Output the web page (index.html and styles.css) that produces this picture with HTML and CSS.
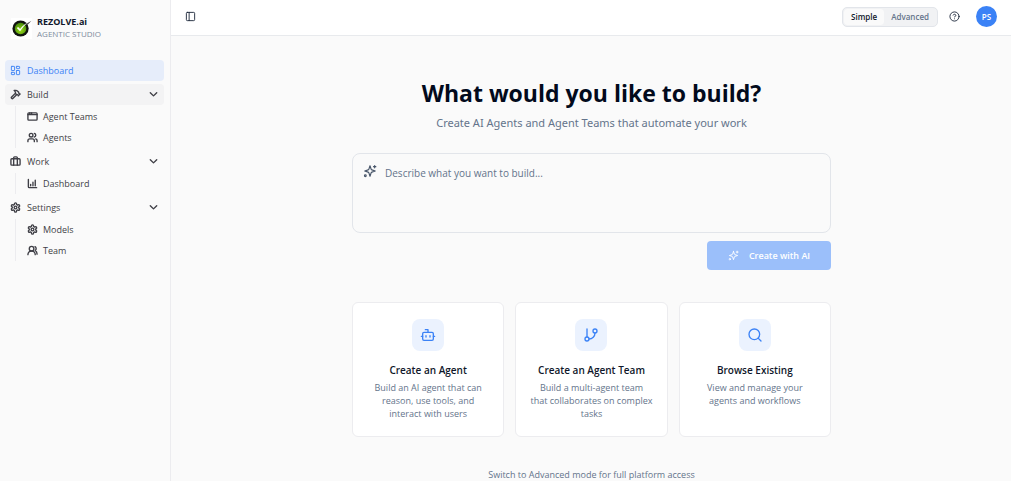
FILE: index.html
```html
<!DOCTYPE html>
<html lang="en">
<head>
<meta charset="utf-8">
<meta name="viewport" content="width=device-width, initial-scale=1">
<title>REZOLVE.ai Agentic Studio</title>
<link rel="stylesheet" href="styles.css">
</head>
<body>
<svg class="sprite" aria-hidden="true">
  <symbol id="sparkles" viewBox="0 0 24 24"><path d="M12 3l-1.900 5.800a2 2 0 0 1-1.300 1.300L3 12l5.800 1.900a2 2 0 0 1 1.300 1.300L12 21l1.900-5.800a2 2 0 0 1 1.300-1.300L21 12l-5.800-1.900a2 2 0 0 1-1.300-1.300L12 3ZM20 2.500v4M22 4.500h-4"/><circle cx="4" cy="20" r="1.500"/></symbol>
  <symbol id="chevron" viewBox="0 0 24 24"><path d="m5 8 7 7 7-7"/></symbol>
  <symbol id="gear" viewBox="0 0 24 24"><path d="M12.220 2h-.44a2 2 0 0 0-2 2v.18a2 2 0 0 1-1 1.730l-.43.25a2 2 0 0 1-2 0l-.15-.08a2 2 0 0 0-2.730.73l-.22.38a2 2 0 0 0 .73 2.730l.15.1a2 2 0 0 1 1 1.720v.51a2 2 0 0 1-1 1.740l-.15.09a2 2 0 0 0-.73 2.730l.22.38a2 2 0 0 0 2.730.73l.15-.08a2 2 0 0 1 2 0l.43.25a2 2 0 0 1 1 1.730V20a2 2 0 0 0 2 2h.44a2 2 0 0 0 2-2v-.18a2 2 0 0 1 1-1.730l.43-.25a2 2 0 0 1 2 0l.15.08a2 2 0 0 0 2.730-.73l.22-.39a2 2 0 0 0-.73-2.730l-.15-.08a2 2 0 0 1-1-1.740v-.5a2 2 0 0 1 1-1.740l.15-.09a2 2 0 0 0 .73-2.730l-.22-.38a2 2 0 0 0-2.730-.73l-.15.08a2 2 0 0 1-2 0l-.43-.25a2 2 0 0 1-1-1.730V4a2 2 0 0 0-2-2z"/><circle cx="12" cy="12" r="3"/></symbol>
</svg>
<div class="app">
  <aside class="sidebar">
    <div class="brand">
      <svg class="logo" viewBox="0 0 44 44" aria-hidden="true">
        <defs><radialGradient id="orb" cx="50%" cy="65%" r="60%"><stop offset="0" stop-color="#9bdc1c"/><stop offset="1" stop-color="#4a8f0a"/></radialGradient></defs>
        <rect width="44" height="44" fill="#fff"/>
        <circle cx="20" cy="22" r="17" fill="#11150f"/>
        <circle cx="20" cy="22" r="12" fill="url(#orb)"/>
        <path d="M12 21l3-2 4 4C25 16 31 11 36 9 30 14 24 20 19 28z" fill="#fff"/>
        <path d="M30 13 43 6 35 14z" fill="#555"/>
      </svg>
      <div class="brand-text">
        <span class="brand-name">REZOLVE.ai</span>
        <span class="brand-sub">AGENTIC STUDIO</span>
      </div>
    </div>
    <nav class="nav" aria-label="Main">
      <a class="nav-row active" href="#dashboard"><svg class="icon" viewBox="0 0 24 24"><rect x="3" y="3" width="7" height="9" rx="1"/><rect x="14" y="3" width="7" height="5" rx="1"/><rect x="14" y="12" width="7" height="9" rx="1"/><rect x="3" y="16" width="7" height="5" rx="1"/></svg>Dashboard</a>
      <div class="group">
        <button class="nav-row hovered" type="button" aria-expanded="true"><svg class="icon" viewBox="0 0 24 24"><path d="m15 12-8.400 8.400a2.100 2.100 0 0 1-3-3L12 9M18 15l4-4M21.500 11.500l-1.900-1.900A2 2 0 0 1 19 8.200V7l-2.300-2.300a6 6 0 0 0-4.200-1.700H9l.9.8A6.200 6.200 0 0 1 12 8.400V10l2 2h1.200a2 2 0 0 1 1.400.6l1.900 1.900"/></svg>Build<svg class="icon chev"><use href="#chevron"/></svg></button>
        <div class="sub">
          <a class="nav-row" href="#teams"><svg class="icon" viewBox="0 0 24 24"><rect x="2" y="4" width="20" height="16" rx="2"/><path d="M10 4v4M2 8h20M6 4v4"/></svg>Agent Teams</a>
          <a class="nav-row" href="#agents"><svg class="icon" viewBox="0 0 24 24"><path d="M16 21v-2a4 4 0 0 0-4-4H6a4 4 0 0 0-4 4v2M22 21v-2a4 4 0 0 0-3-3.900M16 3.100a4 4 0 0 1 0 7.800"/><circle cx="9" cy="7" r="4"/></svg>Agents</a>
        </div>
      </div>
      <div class="group">
        <button class="nav-row" type="button" aria-expanded="true"><svg class="icon" viewBox="0 0 24 24"><rect x="2" y="6" width="20" height="14" rx="2"/><path d="M16 20V4a2 2 0 0 0-2-2h-4a2 2 0 0 0-2 2v16"/></svg>Work<svg class="icon chev"><use href="#chevron"/></svg></button>
        <div class="sub">
          <a class="nav-row" href="#work"><svg class="icon" viewBox="0 0 24 24"><path d="M3 3v16a2 2 0 0 0 2 2h16M8 17v-3M13 17V9M18 17V5"/></svg>Dashboard</a>
        </div>
      </div>
      <div class="group">
        <button class="nav-row" type="button" aria-expanded="true"><svg class="icon"><use href="#gear"/></svg>Settings<svg class="icon chev"><use href="#chevron"/></svg></button>
        <div class="sub">
          <a class="nav-row" href="#models"><svg class="icon"><use href="#gear"/></svg>Models</a>
          <a class="nav-row" href="#team"><svg class="icon" viewBox="0 0 24 24"><path d="M18 21a8 8 0 0 0-16 0"/><circle cx="10" cy="8" r="5"/><path d="M22 20c0-3.400-2-6.500-4-8a5 5 0 0 0-.5-8.300"/></svg>Team</a>
        </div>
      </div>
    </nav>
  </aside>
  <div class="content">
    <header class="topbar">
      <button class="icon-button" type="button" aria-label="Toggle sidebar"><svg class="icon" viewBox="0 0 24 24"><rect x="3" y="3" width="18" height="18" rx="2"/><path d="M9 3v18"/></svg></button>
      <div class="tools">
        <div class="modes">
          <button class="mode selected" type="button" aria-pressed="true">Simple</button>
          <button class="mode" type="button" aria-pressed="false">Advanced</button>
        </div>
        <button class="icon-button" type="button" aria-label="Help"><svg class="icon" viewBox="0 0 24 24"><circle cx="12" cy="12" r="10"/><path d="M9.100 9a3 3 0 0 1 5.800 1c0 2-3 3-3 3M12 17h.01"/></svg></button>
        <button class="avatar" type="button" aria-label="Account">PS</button>
      </div>
    </header>
    <main class="main">
      <div class="panel">
        <h1 class="title">What would you like to build?</h1>
        <p class="lead">Create AI Agents and Agent Teams that automate your work</p>
        <form class="prompt">
          <label class="prompt-box"><svg class="icon prompt-icon"><use href="#sparkles"/></svg><textarea class="prompt-input" aria-label="Describe what you want to build" placeholder="Describe what you want to build..."></textarea></label>
          <button class="create" type="submit" disabled><svg class="icon"><use href="#sparkles"/></svg>Create with AI</button>
        </form>
        <div class="cards">
          <a class="card" href="#new-agent">
            <span class="tile"><svg class="icon" viewBox="0 0 24 24"><path d="M12 8V4H8M2 14h2M20 14h2M15 13v2M9 13v2"/><rect x="4" y="8" width="16" height="12" rx="2"/></svg></span>
            <h2 class="card-title">Create an Agent</h2>
            <p class="card-text">Build an AI agent that can reason, use tools, and interact with users</p>
          </a>
          <a class="card" href="#new-team">
            <span class="tile"><svg class="icon" viewBox="0 0 24 24"><path d="M6 3v12M18 9a9 9 0 0 1-9 9"/><circle cx="18" cy="6" r="3"/><circle cx="6" cy="18" r="3"/></svg></span>
            <h2 class="card-title">Create an Agent Team</h2>
            <p class="card-text">Build a multi-agent team that collaborates on complex tasks</p>
          </a>
          <a class="card" href="#browse">
            <span class="tile"><svg class="icon" viewBox="0 0 24 24"><circle cx="11" cy="11" r="8"/><path d="m21 21-4.300-4.300"/></svg></span>
            <h2 class="card-title">Browse Existing</h2>
            <p class="card-text">View and manage your agents and workflows</p>
          </a>
        </div>
        <p class="hint">Switch to Advanced mode for full platform access</p>
      </div>
    </main>
  </div>
</div>
</body>
</html>
```

FILE: styles.css
```css
* { box-sizing: border-box; }
body {
  margin: 0;
  font-family: "Open Sans", "Noto Sans", sans-serif;
  font-size: 9px;
  line-height: 12px;
  color: #0f172a;
  background: #fafafa;
}
h1, h2, p { margin: 0; }
a { color: inherit; text-decoration: none; }
button, textarea { font: inherit; color: inherit; border: 0; background: none; padding: 0; }
button { cursor: pointer; }
.sprite { position: absolute; width: 0; height: 0; }
.icon {
  width: 11px;
  height: 11px;
  flex: none;
  fill: none;
  stroke: currentColor;
  stroke-width: 2;
  stroke-linecap: round;
  stroke-linejoin: round;
}

.app { display: flex; height: 100vh; }
.sidebar { width: 171px; flex: none; padding: 17px 6px 0 5px; border-right: 1px solid #ececef; }
.brand { display: flex; align-items: center; gap: 5px; height: 22px; padding-left: 6px; margin-bottom: 21px; }
.logo { width: 21px; height: 21px; }
.brand-text { display: flex; flex-direction: column; }
.brand-name { font-weight: 700; }
.brand-sub { font-size: 8px; color: #7c8a9d; }
.nav { display: flex; flex-direction: column; gap: 3px; }
.nav-row {
  display: flex;
  align-items: center;
  gap: 6px;
  width: 100%;
  height: 21px;
  padding: 0 5px;
  border-radius: 4px;
  color: #3f3f46;
  text-align: left;
}
.nav-row .icon { stroke-width: 3; }
.nav-row.active { background: #e6edfa; color: #3b82f6; font-weight: 500; }
.nav-row.active .icon { stroke-width: 2; }
.hovered { background: #f3f3f4; }
.nav-row .chev { margin-left: auto; }
.sub { margin: 1px 0 0 10px; padding-left: 6px; border-left: 1px solid #ececef; }
.sub .nav-row { gap: 5px; }

.content { flex: 1; min-width: 0; display: flex; flex-direction: column; }
.topbar {
  display: flex;
  align-items: center;
  justify-content: space-between;
  flex: none;
  height: 36px;
  padding: 0 14px 2px;
  background: #fff;
  border-bottom: 1px solid #e8eaed;
}
.icon-button { display: flex; color: #1e293b; }
.tools { display: flex; align-items: center; gap: 11px; }
.tools .icon-button { margin-right: 5px; }
.modes { display: flex; padding: 1px; border: 1px solid #e2e5ea; border-radius: 5px; background: #f1f2f4; font-size: 8px; }
.mode { height: 16px; padding: 0 7px; border-radius: 4px; color: #64748b; font-weight: 600; }
.selected { background: #fafafa; color: #0f172a; }
.avatar { width: 21px; height: 21px; border-radius: 50%; background: #3b82f6; color: #fff; font-size: 8px; font-weight: 600; }

.main { flex: 1; min-height: 0; overflow-y: auto; scrollbar-width: none; padding: 40px 16px 0 17px; }
.panel { max-width: 479px; margin: 0 auto; text-align: center; }
.title { font-size: 23px; line-height: 34px; font-weight: 700; color: #020a1c; }
.lead { margin-top: 4px; font-family: "Noto Sans", "Open Sans", sans-serif; font-size: 11px; line-height: 18px; color: #64748b; }
.prompt { display: flex; flex-direction: column; align-items: flex-end; gap: 8px; margin-top: 21px; }
.prompt-box { display: flex; gap: 8px; width: 100%; height: 80px; padding: 10px; border: 1px solid #e2e5ea; border-radius: 8px; }
.prompt-icon { width: 14px; height: 14px; color: #475569; }
.prompt-input { flex: 1; min-width: 0; resize: none; outline: 0; font-size: 10px; line-height: 18px; }
.prompt-input::placeholder { color: #64748b; opacity: 1; }
.create {
  display: flex;
  align-items: center;
  justify-content: center;
  gap: 10px;
  width: 124px;
  height: 29px;
  border-radius: 4px;
  background: #9bbffa;
  color: #fff;
  font-weight: 600;
}
.cards { display: grid; grid-template-columns: repeat(3, 1fr); gap: 11px; margin-top: 32px; }
.card {
  display: flex;
  flex-direction: column;
  align-items: center;
  min-height: 135px;
  padding: 16px 14px;
  background: #fff;
  border: 1px solid #ececef;
  border-radius: 6px;
}
.tile { display: grid; place-items: center; width: 32px; height: 32px; border-radius: 8px; background: #ebf2fe; color: #3b82f6; }
.tile .icon { width: 16px; height: 16px; }
.card-title { margin-top: 11px; font-size: 10px; line-height: 16px; font-weight: 600; white-space: nowrap; }
.card-text { margin-top: 3px; line-height: 13px; color: #64748b; }
.hint { margin-top: 32px; color: #64748b; }
```
